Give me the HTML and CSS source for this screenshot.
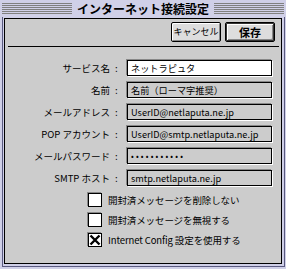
FILE: index.html
```html
<!DOCTYPE html>
<html lang="ja">
<head>
<meta charset="utf-8">
<title>インターネット接続設定</title>
<link rel="stylesheet" href="styles.css">
</head>
<body>
<div class="window">
  <div class="titlebar">
    <div class="stripes"></div>
    <div class="title">インターネット接続設定</div>
    <div class="stripes"></div>
  </div>
  <div class="frame">
    <div class="content">
      <div class="buttons">
        <button class="btn">キャンセル</button>
        <button class="btn btn-default">保存</button>
      </div>
      <div class="separator"></div>
      <div class="form">
        <div class="label">サービス名<span class="colon">:</span></div>
        <div class="field field-active">ネットラピュタ</div>
        <div class="label">名前<span class="colon">:</span></div>
        <div class="field">名前（ローマ字推奨）</div>
        <div class="label">メールアドレス<span class="colon">:</span></div>
        <div class="field">UserID@netlaputa.ne.jp</div>
        <div class="label">POP アカウント<span class="colon">:</span></div>
        <div class="field">UserID@smtp.netlaputa.ne.jp</div>
        <div class="label">メールパスワード<span class="colon">:</span></div>
        <div class="field field-pass">•••••••••••</div>
        <div class="label">SMTP ホスト<span class="colon">:</span></div>
        <div class="field">smtp.netlaputa.ne.jp</div>
      </div>
      <div class="checks">
        <div class="check"><span class="box"></span><span>開封済メッセージを削除しない</span></div>
        <div class="check"><span class="box"></span><span>開封済メッセージを無視する</span></div>
        <div class="check"><span class="box box-checked"><svg width="12" height="12" viewBox="0 0 12 12"><path d="M1.5 1.5 L10.5 10.5 M10.5 1.5 L1.5 10.5" stroke="#000" stroke-width="2.4" fill="none"/></svg></span><span>Internet Config 設定を使用する</span></div>
      </div>
    </div>
  </div>
</div>
</body>
</html>
```

FILE: styles.css
```css
* { box-sizing: border-box; }
html, body { margin: 0; padding: 0; }
body {
  width: 286px;
  height: 269px;
  overflow: hidden;
  font-family: "Noto Sans CJK JP", "DejaVu Sans", sans-serif;
  color: #000;
  background: #d0d0e8;
}
.window {
  width: 286px;
  height: 269px;
  background: #d0d0e8;
  display: flex;
  flex-direction: column;
  padding: 0 1px 2px 2px;
}
.titlebar {
  height: 17px;
  display: flex;
  align-items: center;
  flex: none;
  margin-right: 1px;
}
.stripes {
  flex: 1;
  height: 11px;
  background: repeating-linear-gradient(to bottom, #808080 0 1px, transparent 1px 2px);
}
.title {
  font-size: 12px;
  font-weight: bold;
  line-height: 17px;
  padding: 0 5px;
  white-space: nowrap;
}
.frame {
  flex: 1;
  border: 1px solid #5a5a80;
  border-top: none;
  padding: 1px 2px 2px 1px;
  display: flex;
}
.content {
  flex: 1;
  border: 1px solid #000;
  background: #cccccc;
  display: flex;
  flex-direction: column;
}
.buttons {
  display: flex;
  justify-content: flex-end;
  gap: 4px;
  padding: 3px 6px 0 0;
}
.btn {
  width: 50px;
  height: 20px;
  margin: 0;
  padding: 0;
  font-family: inherit;
  font-size: 9px;
  color: #000;
  background: #dddddd;
  border: 1px solid #000;
  border-radius: 2px;
  box-shadow: inset 1px 1px 0 #fff, inset -1px -1px 0 #888;
  line-height: 18px;
  white-space: nowrap;
}
.btn-default {
  font-size: 11px;
  font-weight: bold;
  box-shadow: inset 0 0 0 1px #333, inset 2px 2px 0 #fff, inset -2px -2px 0 #888;
}
.separator {
  height: 1px;
  background: #000;
  margin: 4px 2px 0 3px;
}
.form {
  display: grid;
  grid-template-columns: 115px 145px;
  column-gap: 7px;
  row-gap: 6px;
  margin-top: 13px;
}
.label {
  text-align: right;
  font-size: 9.5px;
  line-height: 16px;
  height: 16px;
  white-space: nowrap;
}
.colon {
  display: inline-block;
  margin-left: 5px;
  width: 5px;
  text-align: left;
}
.field {
  height: 16px;
  font-size: 9.2px;
  line-height: 14px;
  border: 1px solid #000;
  background: #cccccc;
  padding: 0 3px;
  box-shadow: -1px -1px 0 #888, 1px 1px 0 #fff;
  white-space: nowrap;
  overflow: hidden;
}
.field-active { background: #fff; }
.field-pass { letter-spacing: 2.2px; font-size: 8px; }
.checks {
  display: flex;
  flex-direction: column;
  gap: 6px;
  margin: 7px 0 0 83px;
  font-size: 9.5px;
  letter-spacing: -0.1px;
}
.check {
  display: flex;
  align-items: center;
  gap: 6px;
  height: 14px;
}
.box {
  width: 14px;
  height: 14px;
  border: 1px solid #000;
  background: #fff;
  box-shadow: -1px -1px 0 #888;
  display: flex;
  align-items: center;
  justify-content: center;
  flex: none;
}
.box-checked { box-shadow: -1px -1px 0 #888, inset 0 0 0 1px #fff; }
```
